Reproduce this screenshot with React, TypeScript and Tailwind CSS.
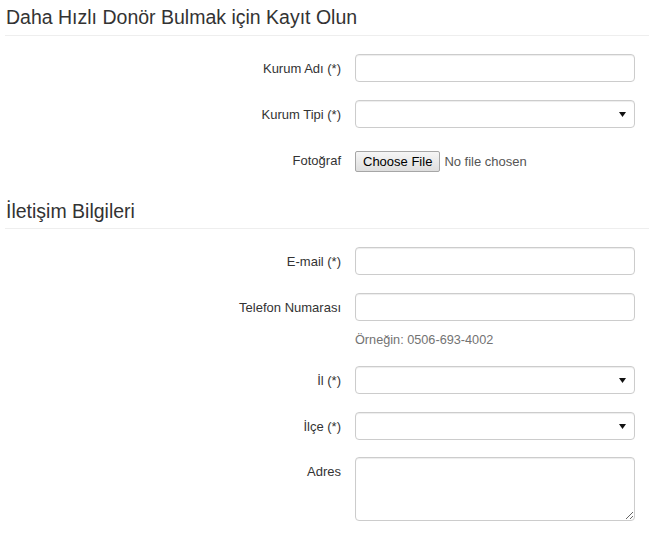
import type { ReactNode } from "react";

const inputCls =
  "w-[280px] h-[28px] rounded-[4px] border border-[#cccccc] bg-white px-[10px] text-[13px] text-[#555] shadow-[inset_0_1px_1px_rgba(0,0,0,0.075)] outline-none";

function Row({ label, children, top = "mt-[18px]" }: { label: string; children: ReactNode; top?: string }) {
  return (
    <div className={`flex items-start ${top}`}>
      <label className="w-[350px] shrink-0 pr-[14px] pt-[6px] text-right text-[13px] leading-[18px] text-[#333]">
        {label}
      </label>
      {children}
    </div>
  );
}

function Select() {
  return (
    <div className="relative w-[280px]">
      <select className={`${inputCls} appearance-none`}>
        <option></option>
      </select>
      <svg
        className="pointer-events-none absolute right-[9px] top-[12px]"
        width="7"
        height="5"
        viewBox="0 0 7 5"
      >
        <path d="M0 0h7L3.5 5z" fill="#111" />
      </svg>
    </div>
  );
}

function Section({ title, top, pb }: { title: string; top: string; pb: string }) {
  return (
    <div className={`${top} ${pb} border-b border-[#eeeeee]`}>
      <h2 className="pl-[1px] text-[19.5px] leading-[22px] text-[#333]">{title}</h2>
    </div>
  );
}

export default function App() {
  return (
    <div className="min-h-screen bg-white pl-[5px] font-['Liberation_Sans',Arial,sans-serif]">
      <Section title="Daha Hızlı Donör Bulmak için Kayıt Olun" top="pt-[6px]" pb="pb-[7px]" />

      <Row label="Kurum Adı (*)">
        <input className={inputCls} />
      </Row>
      <Row label="Kurum Tipi (*)">
        <Select />
      </Row>
      <Row label="Fotoğraf">
        <div className="flex h-[28px] items-center pt-[3px] text-[13px]">
          <button className="h-[21px] rounded-[2px] border border-[#a6a6a6] bg-gradient-to-b from-[#f6f6f6] to-[#dedede] px-[7px] leading-[19px] text-[#000]">
            Choose File
          </button>
          <span className="ml-[4px] text-[#555]">No file chosen</span>
        </div>
      </Row>

      <Section title="İletişim Bilgileri" top="mt-[26px]" pb="pb-[6px]" />

      <Row label="E-mail (*)">
        <input className={inputCls} />
      </Row>
      <Row label="Telefon Numarası">
        <div>
          <input className={inputCls} />
          <p className="mt-[10px] text-[12.7px] leading-[18px] text-[#737373]">Örneğin: 0506-693-4002</p>
        </div>
      </Row>
      <Row label="İl (*)" top="mt-[17px]">
        <Select />
      </Row>
      <Row label="İlçe (*)">
        <Select />
      </Row>
      <Row label="Adres" top="mt-[17px]">
        <textarea className="h-[64px] w-[280px] rounded-[4px] border border-[#cccccc] bg-white px-[10px] py-[5px] text-[13px] shadow-[inset_0_1px_1px_rgba(0,0,0,0.075)] outline-none" />
      </Row>
    </div>
  );
}
